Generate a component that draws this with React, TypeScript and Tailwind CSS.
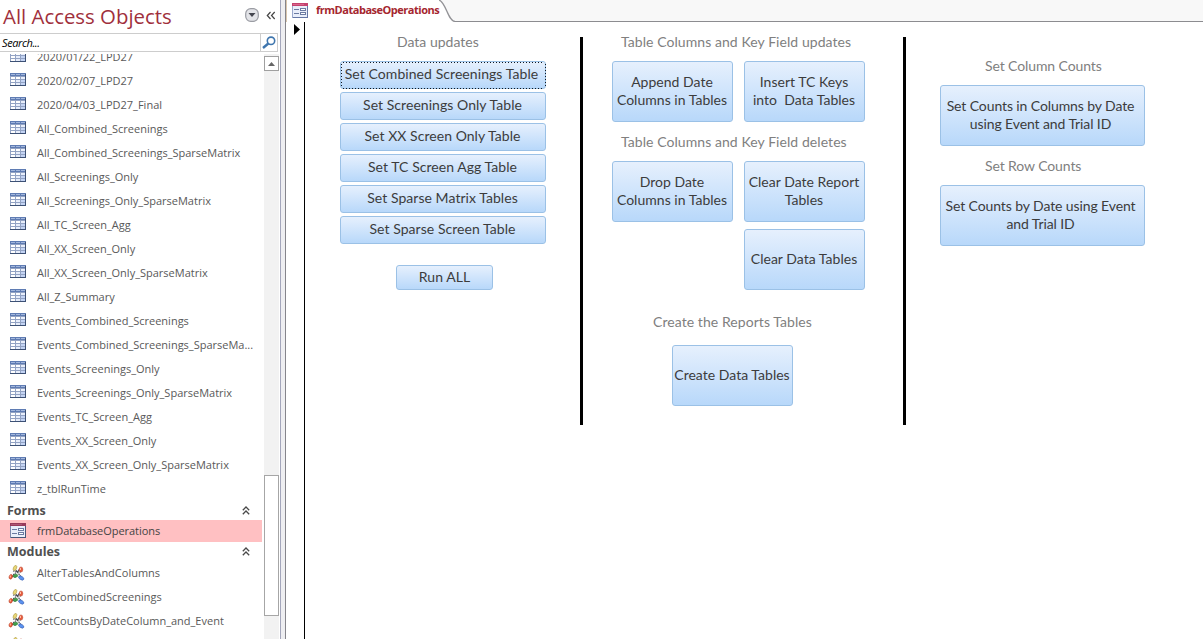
import type { ReactNode } from "react";

const tables = [
  "2020/01/22_LPD27",
  "2020/02/07_LPD27",
  "2020/04/03_LPD27_Final",
  "All_Combined_Screenings",
  "All_Combined_Screenings_SparseMatrix",
  "All_Screenings_Only",
  "All_Screenings_Only_SparseMatrix",
  "All_TC_Screen_Agg",
  "All_XX_Screen_Only",
  "All_XX_Screen_Only_SparseMatrix",
  "All_Z_Summary",
  "Events_Combined_Screenings",
  "Events_Combined_Screenings_SparseMa...",
  "Events_Screenings_Only",
  "Events_Screenings_Only_SparseMatrix",
  "Events_TC_Screen_Agg",
  "Events_XX_Screen_Only",
  "Events_XX_Screen_Only_SparseMatrix",
  "z_tblRunTime",
];

const modules = ["AlterTablesAndColumns", "SetCombinedScreenings", "SetCountsByDateColumn_and_Event"];

const updates = [
  "Set Screenings Only Table",
  "Set XX Screen Only Table",
  "Set TC Screen Agg Table",
  "Set Sparse Matrix Tables",
  "Set Sparse Screen Table",
];

function TableIcon() {
  return (
    <svg width="16" height="13" viewBox="0 0 16 13" shapeRendering="crispEdges" className="shrink-0">
      <rect width="16" height="13" fill="#93a3c4" />
      <rect width="16" height="3" fill="#5f7cb3" />
      <path d="M1 1.5h4M6 1.5h4M11 1.5h4" stroke="#a3b7dd" />
      <path d="M1 4h4v2h-4zM6 4h4v2h-4zM1 7h4v2h-4zM1 10h4v2h-4z" fill="#fff" />
      <path d="M11 4h4v2h-4zM6 7h4v2h-4zM6 10h4v2h-4z" fill="#e8eefb" />
      <path d="M11 7h4v2h-4zM11 10h4v2h-4z" fill="#c3d3f3" />
      <path d="M15.5 1v12M0 12.5h16" stroke="#3d5175" />
    </svg>
  );
}

function FormIcon({ tab = false }: { tab?: boolean }) {
  return (
    <svg width="16" height="15" viewBox="0 0 16 15" shapeRendering="crispEdges" className="shrink-0">
      <rect x=".5" y=".5" width="15" height="14" fill="#e9eefa" stroke={tab ? "#9aa8cc" : "#7d88aa"} />
      <rect width="16" height="3" fill={tab ? "#c4426f" : "#983b5b"} />
      <path d="M1 1.5h11" stroke={tab ? "#d8668c" : "#ad5673"} />
      <path d="M2 6.5h5M2 10.5h5" stroke="#6b7ba2" />
      <path d="M8.500 5.500h5v2h-5zM8.500 9.500h5v2h-5z" fill="#fff" stroke="#6b7ba2" />
      <path d="M15.500 3v12M1 14.500h15" stroke={tab ? "#6577a6" : "#475779"} />
    </svg>
  );
}

function ModuleIcon() {
  return (
    <svg width="17" height="16" viewBox="0 0 17 16" className="shrink-0">
      <path d="M3.500 11.500L12 4M6.500 3.500l7 9M5 6l8 1M2 11l6 1" stroke="#4d4d55" strokeWidth="1.200" strokeDasharray="1.500 .7" />
      <ellipse cx="7" cy="3" rx="1.600" ry="2.700" transform="rotate(25 7 3)" fill="#e8d777" stroke="#a5903a" strokeWidth=".5" />
      <ellipse cx="13" cy="4.500" rx="1.800" ry="2.600" fill="#e65a3c" stroke="#b8452c" strokeWidth=".5" />
      <path d="M12.500 3v2" stroke="#ffc0a8" />
      <ellipse cx="2.800" cy="11.800" rx="1.700" ry="2.400" transform="rotate(20 2.800 11.800)" fill="#e65a3c" stroke="#b8452c" strokeWidth=".5" />
      <path d="M2.300 10.500v2" stroke="#ffc0a8" />
      <ellipse cx="7.500" cy="10.800" rx="2.300" ry="1.500" transform="rotate(-15 7.500 10.800)" fill="#42a34b" stroke="#226a2c" strokeWidth=".5" />
      <ellipse cx="13.200" cy="13" rx="2.900" ry="1.700" transform="rotate(30 13.200 13)" fill="#5a92f0" stroke="#2b4fa3" strokeWidth=".5" />
    </svg>
  );
}

function Row({ icon, label }: { icon: ReactNode; label?: string }) {
  return (
    <div className="flex h-6 shrink-0 items-center text-[#595959]">
      <span className="flex w-[37px] shrink-0">{icon}</span>
      <span className="whitespace-pre">{label}</span>
    </div>
  );
}

function GroupHeader({ title }: { title: string }) {
  return (
    <div className="flex shrink-0 items-center justify-between pr-3 pl-[7px] text-[12.500px] leading-[19px] font-bold text-[#505050]">
      {title}
      <svg width="8" height="9" viewBox="0 0 8 9" fill="none" stroke="#494949" strokeWidth="1.300">
        <path d="M.8 4.200L4 1l3.200 3.200M.8 8.200L4 5l3.200 3.200" />
      </svg>
    </div>
  );
}

function Sidebar() {
  return (
    <aside className="flex h-full w-[280px] shrink-0 flex-col text-[11px]">
      <div className="flex h-[33px] shrink-0 items-center pr-[4px] pl-[3px]">
        <h1 className="grow text-[20.400px] leading-none whitespace-nowrap text-[#9f2f3c]">All Access Objects</h1>
        <svg width="14" height="14" viewBox="0 0 14 14" className="mr-[7px] -mt-1">
          <rect x=".7" y=".7" width="12.600" height="12.600" rx="5" fill="#e3e4e8" stroke="#9a9ca3" strokeWidth="1.200" />
          <path d="M3.500 5h7L7 9z" fill="#44464f" />
        </svg>
        <svg width="10" height="9" viewBox="0 0 10 9" fill="none" stroke="#444" strokeWidth="1.200" className="-mt-[3px]">
          <path d="M4.500 1L1.300 4.500l3.200 3.500M8.700 1L5.500 4.500l3.200 3.500" />
        </svg>
      </div>
      <div className="mr-[2px] flex h-[19px] shrink-0 border border-l-0 border-[#cdcdcd]">
        <div className="grow pl-[2px] leading-[17px] tracking-[-0.4px] text-black italic">Search...</div>
        <div className="flex w-[17px] items-center justify-center border-l border-[#cdcdcd]">
          <svg width="14" height="13" viewBox="0 0 14 13" fill="none" stroke="#3f76ae" className="shrink-0">
            <circle cx="9" cy="4.800" r="3.700" strokeWidth="1.600" />
            <path d="M6.300 7.500L1 12" strokeWidth="2.400" />
          </svg>
        </div>
      </div>
      <div className="mt-[2px] flex min-h-0 grow">
        <div className="flex w-[262px] shrink-0 flex-col overflow-hidden">
          <div className="-mt-[9px] flex shrink-0 flex-col">
            {tables.map((t) => (
              <Row key={t} label={t} icon={<span className="-mt-[3px] ml-[10px]"><TableIcon /></span>} />
            ))}
          </div>
          <GroupHeader title="Forms" />
          <div className="flex h-[22px] shrink-0 items-center bg-[#ffc0c2] text-[#444]">
            <span className="-mt-px flex w-[37px] pl-[10px]"><FormIcon /></span>
            <span className="tracking-[-0.05px]">frmDatabaseOperations</span>
          </div>
          <GroupHeader title="Modules" />
          {modules.map((m) => (
            <Row key={m} label={m} icon={<span className="ml-2"><ModuleIcon /></span>} />
          ))}
          <Row icon={<span className="ml-2"><ModuleIcon /></span>} />
        </div>
        <div className="ml-[2px] flex w-[15px] shrink-0 flex-col bg-[#f2f2f2]">
          <div className="mt-[2px] flex h-[15px] shrink-0 items-center justify-center border border-[#a0a0a0] bg-white">
            <svg width="7" height="4" viewBox="0 0 7 4"><path d="M0 4L3.500 0L7 4z" fill="#666" /></svg>
          </div>
          <div className="mt-[404px] h-[141px] shrink-0 border border-[#a6a6a6] bg-white" />
        </div>
      </div>
    </aside>
  );
}

const face =
  "flex items-center justify-center rounded-[3px] border border-[#9bc1e6] bg-linear-to-b from-[#e6f0fd] to-[#b8d8fa] text-center leading-[18px] whitespace-pre text-[#3c3c3c]";

function WideButton({ children }: { children: ReactNode }) {
  return <button className={`${face} h-7 w-[206px] pr-px pb-[2px] tracking-[0.05px]`}>{children}</button>;
}

function TallButton({ children }: { children: ReactNode }) {
  return <button className={`${face} h-[61px] w-[121px] pr-px pb-[2px] tracking-[0.02px]`}>{children}</button>;
}

function CountButton({ children }: { children: ReactNode }) {
  return <button className={`${face} mt-[10px] h-[61px] w-[205px] pr-1 pb-[2px] tracking-[-0.1px]`}>{children}</button>;
}

function Bar() {
  return <div className="mt-[15px] h-[388px] w-[3px] shrink-0 bg-black" />;
}

function FormBody() {
  return (
    <div className="flex min-h-0 grow items-start font-['Lato','Open_Sans',sans-serif] text-[14px] leading-[18px] tracking-[0.07px] text-[#808080]">
      <section className="mr-[34px] ml-[35px] flex w-[206px] shrink-0 flex-col pt-[11px]">
        <h2 className="pl-[57px] tracking-[0px]">Data updates</h2>
        <div className="mt-[10px] flex flex-col gap-[3px]">
          <button className={`${face} relative h-7 w-[206px] pr-[3px] pb-[2px]`}>
            Set Combined Screenings Table
            <span className="absolute -inset-px">
              <svg width="206" height="28" className="block" shapeRendering="crispEdges">
                <path d="M3 1.500H204M3 27.500H204M1.500 3V26M205.500 3V26" fill="none" stroke="#101820" strokeDasharray="1 2" />
              </svg>
            </span>
          </button>
          {updates.map((u) => (
            <WideButton key={u}>{u}</WideButton>
          ))}
        </div>
        <button className={`${face} mt-[21px] ml-14 h-[25px] w-[97px] pb-px`}>Run ALL</button>
      </section>
      <Bar />
      <section className="mr-[38px] ml-[29px] flex w-[253px] shrink-0 flex-col pt-[11px]">
        <h2 className="pl-[9px] whitespace-nowrap">Table Columns and Key Field updates</h2>
        <div className="mt-[10px] flex gap-[11px]">
          <TallButton>{"Append Date\nColumns in Tables"}</TallButton>
          <TallButton>{"Insert TC Keys\ninto  Data Tables"}</TallButton>
        </div>
        <h2 className="mt-[11px] pl-[9px] whitespace-nowrap">Table Columns and Key Field deletes</h2>
        <div className="mt-[10px] flex gap-[11px]">
          <TallButton>{"Drop Date\nColumns in Tables"}</TallButton>
          <div className="flex flex-col gap-[7px]">
            <TallButton>{"Clear Date Report\nTables"}</TallButton>
            <TallButton>Clear Data Tables</TallButton>
          </div>
        </div>
        <h2 className="mt-[23px] pl-[41px]">Create the Reports Tables</h2>
        <div className="mt-[14px] ml-[60px] flex">
          <TallButton>Create Data Tables</TallButton>
        </div>
      </section>
      <Bar />
      <section className="ml-[34px] flex w-[205px] shrink-0 flex-col pt-[35px]">
        <h2 className="pl-[45px] tracking-[-0.1px]">Set Column Counts</h2>
        <CountButton>{"Set Counts in Columns by Date\nusing Event and Trial ID"}</CountButton>
        <h2 className="mt-[11px] pl-[45px] tracking-[-0.1px]">Set Row Counts</h2>
        <CountButton>{"Set Counts by Date using Event\nand Trial ID"}</CountButton>
      </section>
    </div>
  );
}

export default function App() {
  return (
    <div className="flex h-[639px] w-[1203px] overflow-hidden bg-white font-['Open_Sans','Noto_Sans',sans-serif]">
      <Sidebar />
      <div className="w-[6px] shrink-0 border-r border-l border-r-[#85858b] border-l-[#a3a6bb] bg-[#eeeef1]" />
      <main className="flex min-w-0 grow flex-col">
        <div className="flex h-[22px] shrink-0">
          <div className="flex w-[153px] shrink-0 items-center border-l border-[#d9c6ae] pb-[2px] pl-[5px] text-[11px] font-bold whitespace-nowrap text-[#a5262f]">
            <FormIcon tab />
            <span className="ml-2 tracking-[-0.48px]">frmDatabaseOperations</span>
          </div>
          <svg width="16" height="22" viewBox="0 0 16 22" className="shrink-0">
            <path d="M0 0C7 2 9 21.500 16 21.500V0z" fill="#f8f8f8" />
            <path d="M0 0C7 2 9 21.500 16 21.500" fill="none" stroke="#929296" strokeWidth="1.300" />
          </svg>
          <div className="grow border-b border-[#8c8c90] bg-[#f8f8f8]" />
        </div>
        <div className="flex min-h-0 grow">
          <div className="w-[19px] shrink-0 border-r border-black pt-[2px] pl-2">
            <svg width="6" height="11" viewBox="0 0 6 11"><path d="M0 0L6 5.500L0 11z" fill="#000" /></svg>
          </div>
          <FormBody />
        </div>
      </main>
    </div>
  );
}
